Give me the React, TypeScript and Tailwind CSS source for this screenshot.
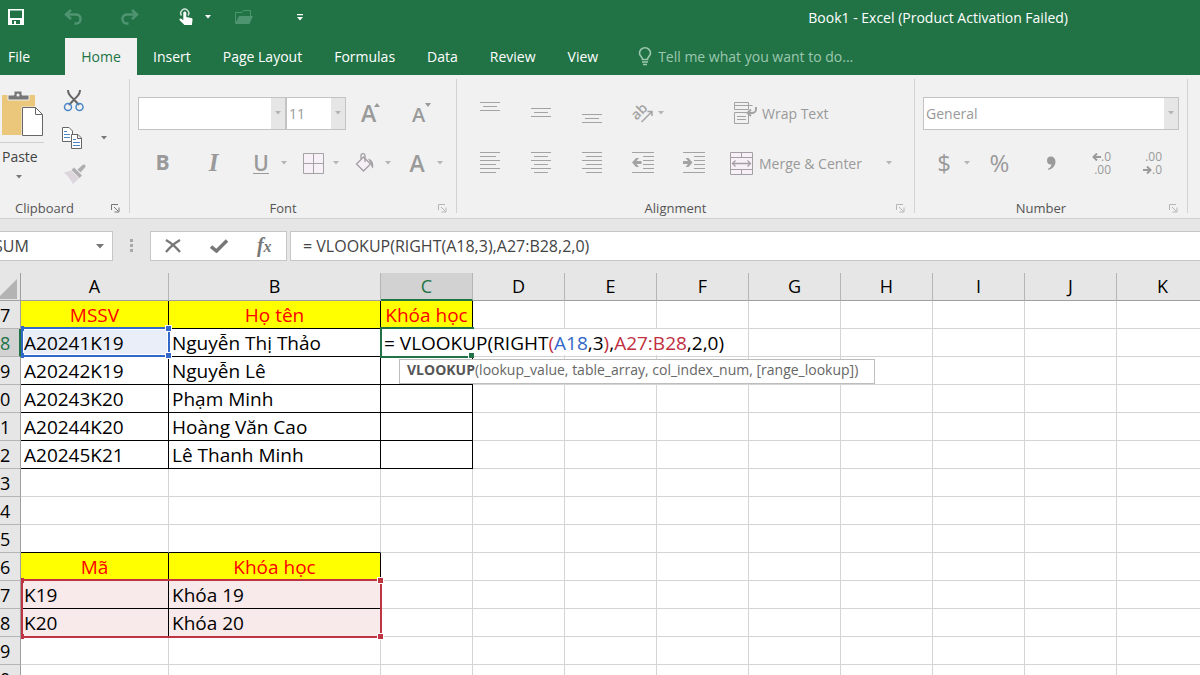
import type { ReactNode } from "react";

type Row = { n: string; a?: string; b?: string; c?: string; kind?: "head" | "data" | "lookupHead" | "lookup" };

const tabs = ["Insert", "Page Layout", "Formulas", "Data", "Review", "View"];

const columns = ["A", "B", "C", "D", "E", "F", "G", "H", "I", "J", "K"];

const rows: Row[] = [
  { n: "7", a: "MSSV", b: "Họ tên", c: "Khóa học", kind: "head" },
  { n: "8", a: "A20241K19", b: "Nguyễn Thị Thảo", kind: "data" },
  { n: "9", a: "A20242K19", b: "Nguyễn Lê", kind: "data" },
  { n: "0", a: "A20243K20", b: "Phạm Minh", kind: "data" },
  { n: "1", a: "A20244K20", b: "Hoàng Văn Cao", kind: "data" },
  { n: "2", a: "A20245K21", b: "Lê Thanh Minh", kind: "data" },
  { n: "3" },
  { n: "4" },
  { n: "5" },
  { n: "6", a: "Mã", b: "Khóa học", kind: "lookupHead" },
  { n: "7", a: "K19", b: "Khóa 19", kind: "lookup" },
  { n: "8", a: "K20", b: "Khóa 20", kind: "lookup" },
  { n: "9" },
  { n: "0" },
];

function Caret({ className = "text-[#b5b5b5]" }: { className?: string }) {
  return (
    <svg width="6" height="4" viewBox="0 0 6 4" className={`shrink-0 ${className}`}>
      <path d="M0 0h6L3 3.5z" fill="currentColor" />
    </svg>
  );
}

function Tool({ label, children }: { label: string; children: ReactNode }) {
  return (
    <button type="button" aria-label={label} className="flex h-8 w-[51px] items-center justify-center">
      {children}
    </button>
  );
}

function SplitTool({ label, children }: { label: string; children: ReactNode }) {
  return (
    <button type="button" aria-label={label} className="flex h-8 w-[52px] items-center gap-[2px] pl-1">
      <span className="flex w-9 justify-center">{children}</span>
      <Caret />
    </button>
  );
}

function Group({ label, className = "", labelClass = "", active = false, children }: {
  label: string;
  className?: string;
  labelClass?: string;
  active?: boolean;
  children: ReactNode;
}) {
  return (
    <section aria-label={label} className={`flex shrink-0 flex-col pt-[13px] ${className}`}>
      {children}
      <div className="mt-[10px] flex h-5 items-center">
        <span className={`flex-1 text-center text-[13px] leading-5 text-[#555] ${labelClass}`}>{label}</span>
        <button type="button" aria-label={`${label} settings`} className={`w-5 pl-[2px] ${active ? "text-[#777]" : "text-[#b5b5b5]"}`}>
          <svg width="9" height="9" viewBox="0 0 9 9" fill="none" stroke="currentColor">
            <path d="M.5 6V.5H7M3 3l4 4M8 3.500V8H3.500" />
          </svg>
        </button>
      </div>
    </section>
  );
}

function Divider() {
  return <div className="mt-1 mb-[5px] w-px shrink-0 bg-[#d2d2d2]" />;
}

/* Horizontal strokes for the alignment buttons, each one [x, y, width] */
function Lines({ lines }: { lines: number[][] }) {
  return (
    <svg width="22" height="22" viewBox="0 0 22 22" fill="#a3a3a3">
      {lines.map(([x, y, w]) => (
        <rect key={y} x={x} y={y} width={w} height="1" />
      ))}
    </svg>
  );
}

function IndentIcon({ right = false }: { right?: boolean }) {
  return (
    <svg width="22" height="22" viewBox="0 0 22 22" fill="#a3a3a3">
      <path d="M0 0h22v1H0zM11 4h11v1H11zM11 8h11v1H11zM11 12h11v1H11zM11 16h11v1H11zM0 20h22v1H0z" />
      <path
        d={right ? "M0 9h5L2.500 6H5.500L9.500 10.500 5.500 15H2.500L5 12H0z" : "M9.500 9H4.500L7 6H4L0 10.500 4 15H7L4.500 12h5z"}
      />
    </svg>
  );
}

function TitleBar() {
  return (
    <div className="flex h-[34px] items-center">
      <div className="flex flex-1 items-center pl-2 text-white">
        <button type="button" aria-label="Save">
          <svg width="16" height="16" viewBox="0 0 16 16">
            <path fill="currentColor" fillRule="evenodd" d="M0 0h16v16H0zM2 1.500v7.500h12V1.500zM4 11v4h2v-3h2v3h4v-4z" />
          </svg>
        </button>
        <button type="button" aria-label="Undo" className="ml-10 text-[#4f9470]">
          <svg width="18" height="16" viewBox="0 0 18 16" fill="none" stroke="currentColor" strokeWidth="2.500">
            <path d="M7 1 2 5.500 7 10M2 5.500h9.500c3 0 5 1.500 5 4.500s-2 4.500-4 4.500h-2" />
          </svg>
        </button>
        <button type="button" aria-label="Redo" className="ml-[39px] text-[#4f9470]">
          <svg width="18" height="16" viewBox="0 0 18 16" fill="none" stroke="currentColor" strokeWidth="2.500">
            <path d="M11 1l5 4.500-5 4.500M16 5.500H6.500c-3 0-5 1.500-5 4.500s2 4.500 4 4.500h2" />
          </svg>
        </button>
        <button type="button" aria-label="Touch or mouse mode" className="ml-10 flex items-center gap-3">
          <svg width="14" height="18" viewBox="0 0 14 18">
            <path d="M2.500 7.500A4 4 0 1 1 9 7.500" fill="none" stroke="currentColor" strokeWidth="1.500" opacity=".8" />
            <path
              fill="currentColor"
              d="M4.300 5c0-2 3-2 3 0v4l5 1c1 .2 1.300 1 1.200 2l-.6 5H5.500L.7 12.200c-.8-1 .5-2.200 1.600-1.400l2 1.500z"
            />
          </svg>
          <Caret className="text-white" />
        </button>
        <button type="button" aria-label="Open" className="ml-6 text-[#4f9470]">
          <svg width="18" height="15" viewBox="0 0 18 15">
            <path d="M.5 13V2.500H7L8.500.500h7V6" fill="none" stroke="currentColor" />
            <path d="M4 6h14l-3.500 8H0z" fill="currentColor" />
          </svg>
        </button>
        <button type="button" aria-label="Customize quick access" className="ml-11">
          <svg width="6" height="7" viewBox="0 0 6 7" fill="currentColor">
            <path d="M0 0h6v1.300H0zM0 3h6L3 6.500z" />
          </svg>
        </button>
      </div>
      <h1 className="pr-[132px] text-[14px] text-white">Book1 - Excel (Product Activation Failed)</h1>
    </div>
  );
}

function Tabs() {
  return (
    <nav className="flex h-[41px] items-end text-[14px] text-white">
      <button type="button" className="h-[37px] w-[65px] pl-2 text-left">File</button>
      <button type="button" className="h-[37px] w-[72px] bg-[#f1f1f1] text-[#217346]">Home</button>
      {tabs.map((tab) => (
        <button key={tab} type="button" className="h-[37px] px-4">{tab}</button>
      ))}
      <button type="button" className="flex h-[37px] items-center gap-[6px] pl-6 text-[#9dc7af]">
        <svg width="14" height="19" viewBox="0 0 14 19" fill="none" stroke="currentColor" strokeWidth="1.600">
          <path d="M4.500 12.500c0-2.500-3-3.500-3-6.500a5.500 5.200 0 0 1 11 0c0 3-3 4-3 6.500z" />
          <path d="M4 15h6M5 17.500h4" />
        </svg>
        Tell me what you want to do...
      </button>
    </nav>
  );
}

function ClipboardGroup() {
  return (
    <Group label="Clipboard" active labelClass="pr-5" className="w-[129px]">
      <div className="flex h-[100px]">
        <button type="button" className="flex w-[44px] flex-col items-start text-[14px] text-[#444]">
          <svg width="43" height="47" viewBox="0 0 43 47" className="mt-px">
            <path fill="#eac77b" d="M2 6h33v40H2z" />
            <path fill="#777" d="M8 6h6V2h8v4h7v5H8z" stroke="#f1f1f1" />
            <circle cx="18" cy="6" r="1.500" fill="#f1f1f1" />
            <path d="M21.500 17.500h15l7 7v22h-22z" fill="#f1f1f1" />
            <path d="M22.500 18.500h13l7 7v21h-20z" fill="#fff" stroke="#666" />
            <path d="M35.500 18.500v7h7" fill="none" stroke="#666" />
          </svg>
          <span className="mt-[6px] h-px w-full bg-[#d0d0d0]" />
          <span className="mt-1 ml-[2px] leading-5">Paste</span>
          <span className="mt-2 ml-4"><Caret className="text-[#777]" /></span>
        </button>
        <div className="flex flex-col items-start gap-[15px] pl-[18px]">
          <button type="button" aria-label="Cut">
            <svg width="24" height="24" viewBox="0 0 24 24" fill="none">
              <path d="M6 2c0 4 3 7 5.500 9L17 17M18 2c0 4-3 7-5.500 9L7 17" stroke="#666" strokeWidth="2" />
              <circle cx="6" cy="19" r="3.500" stroke="#4a86c5" strokeWidth="1.500" />
              <circle cx="17.500" cy="19" r="3.500" stroke="#4a86c5" strokeWidth="1.500" />
            </svg>
          </button>
          <button type="button" aria-label="Copy" className="flex items-center gap-[19px]">
            <svg width="20" height="22" viewBox="0 0 20 22" fill="#fff" stroke="#666">
              <path d="M.5.500H7L10.500 4v10.500H.5z" />
              <path d="M2 4.500h3M2 7.500h6M2 10.500h6" stroke="#4a86c5" />
              <path d="M9.500 7.500H16l3.500 3.500v10.500h-10zM15.500 7.500v4h4" />
              <path d="M11 12.500h3M11 15.500h7M11 18.500h7" stroke="#4a86c5" />
            </svg>
            <Caret className="text-[#777]" />
          </button>
          <button type="button" aria-label="Format Painter" className="pl-px">
            <svg width="24" height="20" viewBox="0 0 24 20">
              <path d="M1 8.500 8 6.500l8 8L10 20C7 15 4 11 1 8.500z" fill="#ddd6dd" />
              <path d="m8.500 6 2.500-2.500 8 8-2.500 2.500z" fill="#b0aeb0" />
              <path d="m14.500 5.500 5-4.500c2-1.500 4 .5 2.500 2.500l-4.500 5z" fill="#b0aeb0" />
            </svg>
          </button>
        </div>
      </div>
    </Group>
  );
}

function FontGroup() {
  return (
    <Group label="Font" className="w-[326px]">
      <div className="flex h-[50px] items-center pl-2">
        <div className="flex h-[33px] w-[148px] items-center border border-[#c3c3c3] bg-white">
          <input aria-label="Font name" defaultValue="" className="h-full min-w-0 flex-1 outline-none" />
          <span className="flex h-full w-[14px] items-center justify-center bg-[#e6e6e6]"><Caret /></span>
        </div>
        <div className="flex h-[33px] w-[60px] items-center border border-[#c3c3c3] bg-white">
          <input aria-label="Font size" defaultValue="11" className="h-full min-w-0 flex-1 pl-[2px] text-[14px] text-[#999] outline-none" />
          <span className="flex h-full w-[14px] items-center justify-center bg-[#e6e6e6]"><Caret /></span>
        </div>
        <Tool label="Increase font size">
          <svg width="22" height="24" viewBox="0 0 22 24" fill="#9a9a9a" className="overflow-visible">
            <text x="0" y="21" className="text-[23px] font-semibold">A</text>
            <path d="M16 2l3 4h-6z" />
          </svg>
        </Tool>
        <Tool label="Decrease font size">
          <svg width="22" height="24" viewBox="0 0 22 24" fill="#9a9a9a" className="overflow-visible">
            <text x="0" y="21" className="text-[20px] font-semibold">A</text>
            <path d="M13 2h6l-3 4z" />
          </svg>
        </Tool>
      </div>
      <div className="flex h-[50px] items-center pl-[7px] text-[21px] text-[#9a9a9a]">
        <Tool label="Bold"><b>B</b></Tool>
        <Tool label="Italic"><i className="font-['Liberation_Serif',serif] text-[25px] font-bold">I</i></Tool>
        <SplitTool label="Underline">
          <span className="border-b border-[#9a9a9a] leading-5 font-semibold">U</span>
        </SplitTool>
        <SplitTool label="Borders">
          <svg width="21" height="21" viewBox="0 0 21 21" fill="#f7f0f7" stroke="#a3a3a3">
            <path d="M.5.500h20v20H.5zM10.500.500v20M.5 10.500h20" />
          </svg>
        </SplitTool>
        <SplitTool label="Fill colour">
          <svg width="20" height="20" viewBox="0 0 20 20" fill="none" stroke="#a39fa3" strokeWidth="1.300">
            <path d="M8.500 4 15.500 11 8.500 18 1.500 11z" fill="#f7f0f7" />
            <path d="M6 6V2.500c0-2.500 4-2.500 4 0V9" />
            <path d="M13 5.500c4 1 6 4 5 10-1.500-1-2-3-2-4.500z" fill="#a39fa3" stroke="none" />
          </svg>
        </SplitTool>
        <SplitTool label="Font colour"><span className="text-[23px] font-semibold">A</span></SplitTool>
      </div>
    </Group>
  );
}

function AlignmentGroup() {
  return (
    <Group label="Alignment" className="w-[457px]">
      <div className="flex h-[50px] items-center pl-[7px]">
        <Tool label="Top align"><Lines lines={[[1, 0, 20], [4, 4, 14], [1, 8, 20]]} /></Tool>
        <Tool label="Middle align"><Lines lines={[[1, 6, 20], [4, 10, 14], [1, 14, 20]]} /></Tool>
        <Tool label="Bottom align"><Lines lines={[[1, 12, 20], [4, 16, 14], [1, 20, 20]]} /></Tool>
        <button type="button" aria-label="Orientation" className="flex h-8 w-[116px] items-center gap-1 pl-4">
          <svg width="21" height="20" viewBox="0 0 21 20" fill="none" stroke="#a3a3a3" strokeWidth="1.500" className="overflow-visible">
            <text x="0" y="15" transform="rotate(-45 5 12)" fill="#a3a3a3" stroke="none" className="text-[14px] font-semibold">ab</text>
            <path d="M8.500 19 19 8.500M14.500 8.500H19V13" />
          </svg>
          <Caret />
        </button>
        <button type="button" className="flex items-center gap-1 text-[14px] text-[#999]">
          <svg width="25" height="24" viewBox="0 0 25 24" fill="none" stroke="#a3a3a3">
            <path d="M1.500 1.500h14v7h-14zM1.500 11.500h14v11h-14zM1.500 4.500h18M4 15.500h9M4 18.500h9" />
            <path d="M23 6v2.500c0 2-2 3.500-4 3.500h-4M18 8.500 14.500 12l3.500 3" strokeWidth="2" />
          </svg>
          Wrap Text
        </button>
      </div>
      <div className="flex h-[50px] items-center pl-[7px]">
        <Tool label="Align left"><Lines lines={[[1, 0, 20], [1, 4, 16], [1, 8, 20], [1, 12, 16], [1, 16, 20], [1, 20, 16]]} /></Tool>
        <Tool label="Center"><Lines lines={[[1, 0, 20], [4, 4, 14], [1, 8, 20], [4, 12, 14], [1, 16, 20], [4, 20, 14]]} /></Tool>
        <Tool label="Align right"><Lines lines={[[1, 0, 20], [5, 4, 16], [1, 8, 20], [5, 12, 16], [1, 16, 20], [5, 20, 16]]} /></Tool>
        <Tool label="Decrease indent"><IndentIcon /></Tool>
        <Tool label="Increase indent"><IndentIcon right /></Tool>
        <button type="button" className="flex flex-1 items-center gap-[6px] pr-[22px] pl-[11px] text-[14px] text-[#999]">
          <svg width="23" height="23" viewBox="0 0 23 23" fill="#f7f0f7" stroke="#a39fa3">
            <path d="M.5.500h22v22H.5zM.5 5.500h22M.5 17.500h22M11.500.500v5M11.500 17.500v5" />
            <path d="M2.500 11.500h18M5.500 8.500l-3 3 3 3M17.500 8.500l3 3-3 3" fill="none" strokeWidth="1.300" />
          </svg>
          <span className="flex-1 text-left">Merge &amp; Center</span>
          <Caret />
        </button>
      </div>
    </Group>
  );
}

function NumberGroup() {
  return (
    <Group label="Number" className="w-[272px]">
      <div className="flex h-[50px] items-center px-2">
        <div className="flex h-[33px] flex-1 items-center border border-[#c3c3c3] bg-white">
          <select aria-label="Number format" className="h-full min-w-0 flex-1 appearance-none pl-[2px] text-[14px] text-[#999] outline-none">
            <option>General</option>
          </select>
          <span className="flex h-full w-[14px] items-center justify-center bg-[#e6e6e6]"><Caret /></span>
        </div>
      </div>
      <div className="flex h-[50px] items-center pl-[7px] text-[#9a9a9a]">
        <SplitTool label="Accounting format"><span className="text-[24px]">$</span></SplitTool>
        <Tool label="Percent"><span className="text-[24px]">%</span></Tool>
        <Tool label="Comma style">
          <svg width="10" height="14" viewBox="0 0 10 14" fill="currentColor">
            <path d="M1 4.500C1 2 2.500.500 5 .500s4.500 2 4.500 5c0 4-3 7.500-7 8.500L2 12.800c2-1 3.400-2.500 3.500-4.300C3 9 1 7.500 1 4.500z" />
          </svg>
        </Tool>
        <Tool label="Increase decimal">
          <span className="flex flex-col items-end text-[12px] leading-[13px]">
            <span className="flex items-center">
              <svg width="9" height="8" viewBox="0 0 9 8" fill="none" stroke="currentColor" strokeWidth="2"><path d="M9 4H1.500M5 .500 1.500 4 5 7.500" /></svg>
              .0
            </span>
            <span>.00</span>
          </span>
        </Tool>
        <Tool label="Decrease decimal">
          <span className="flex flex-col items-end text-[12px] leading-[13px]">
            <span>.00</span>
            <span className="flex items-center">
              <svg width="9" height="8" viewBox="0 0 9 8" fill="none" stroke="currentColor" strokeWidth="2"><path d="M0 4h7.500M4 .500 7.500 4 4 7.500" /></svg>
              .0
            </span>
          </span>
        </Tool>
      </div>
    </Group>
  );
}

function FormulaBar() {
  return (
    <div className="flex h-[54px] shrink-0 items-center bg-[#e6e6e6] text-[16px] text-[#444]">
      <div className="flex h-[30px] w-[113px] items-center overflow-hidden border border-l-0 border-[#c6c6c6] bg-white pr-2">
        <input aria-label="Name box" defaultValue="SUM" className="-ml-[6px] h-full min-w-0 flex-1 outline-none" />
        <svg width="8" height="5" viewBox="0 0 8 5"><path d="M0 0h8L4 4.500z" fill="#777" /></svg>
      </div>
      <svg width="3" height="14" viewBox="0 0 3 14" fill="#a8a8a8" className="ml-[17px]">
        <path d="M0 0h3v3H0zM0 5h3v3H0zM0 10h3v3H0z" />
      </svg>
      <div className="ml-[17px] flex h-[30px] w-[137px] items-center justify-around border border-[#c6c6c6] bg-white text-[#777]">
        <button type="button" aria-label="Cancel">
          <svg width="16" height="14" viewBox="0 0 16 14" fill="none" stroke="currentColor" strokeWidth="2.200">
            <path d="M1 1c5 3 10 7 14 12M15 1C10 4 5 8 1 13" />
          </svg>
        </button>
        <button type="button" aria-label="Enter">
          <svg width="18" height="14" viewBox="0 0 18 14" fill="none" stroke="currentColor" strokeWidth="3.500">
            <path d="m1 7.500 5.500 4.500L17 1.500" />
          </svg>
        </button>
        <button type="button" aria-label="Insert function" className="font-['Liberation_Serif',serif] font-bold italic">
          <span className="text-[20px] leading-6">f</span>
          <span className="text-[16px] leading-6">x</span>
        </button>
      </div>
      <input
        aria-label="Formula bar"
        defaultValue="= VLOOKUP(RIGHT(A18,3),A27:B28,2,0)"
        className="ml-[3px] h-[30px] min-w-0 flex-1 border border-r-0 border-[#c6c6c6] bg-white pl-3 outline-none"
      />
    </div>
  );
}

/* Cell under edit: its text runs over the neighbours, with the argument hint below */
function CellEditor() {
  return (
    <>
      <div className="absolute -top-[2px] -left-px z-10 h-[31px] w-[94px] border-2 border-[#217346]" />
      <div className="absolute top-0 left-px z-20 h-[26px] w-[366px] bg-white pl-[2px] leading-[29px] whitespace-pre">
        = VLOOKUP(RIGHT<span className="text-[#c0303f]">(</span>
        <span className="text-[#3268c8]">A18</span>,3<span className="text-[#c0303f]">)</span>,
        <span className="text-[#c0303f]">A27:B28</span>,2,0)
      </div>
      <div className="absolute right-[-2px] bottom-[-2px] z-20 size-[6px] border-t border-l border-white bg-[#217346]" />
      <div role="tooltip" className="absolute top-[30px] left-[18px] z-30 h-[25px] border border-[#bdbdbd] bg-white pr-4 pl-[7px] text-[14px] leading-5 whitespace-nowrap text-[#666]">
        <b className="text-[#555]">VLOOKUP</b>(lookup_value, table_array, col_index_num, [range_lookup])
      </div>
    </>
  );
}

function RangeBox({ blue = false }: { blue?: boolean }) {
  const handle = blue ? "bg-[#3268c8]" : "bg-[#be3442]";
  return (
    <div
      className={
        blue
          ? "absolute -top-[2px] left-0 z-10 h-[30px] w-[149px] border-2 border-[#3268c8] shadow-[inset_0_0_0_1px_#fff]"
          : "absolute -top-[2px] left-0 z-10 h-[59px] w-[361px] border-2 border-[#be3442]"
      }
    >
      <i className={`absolute -top-[3px] -left-[2px] h-[5px] w-[3px] ${handle}`} />
      <i className={`absolute -top-[4px] -right-[4px] size-[7px] border border-white ${handle}`} />
      <i className={`absolute -bottom-[3px] -left-[2px] h-[5px] w-[3px] ${handle}`} />
      <i className={`absolute -right-[4px] -bottom-[4px] size-[7px] border border-white ${handle}`} />
    </div>
  );
}

function cellStyle(row: Row, col: string, i: number) {
  const black = "border-black";
  const grid = "border-[#d4d4d4]";
  const inTable = row.kind && (col === "A" || col === "B" || (col === "C" && i < 6));
  if (!inTable) {
    // the row above the lookup table carries its top edge
    return i === 8 && (col === "A" || col === "B") ? "border-r-[#d4d4d4] border-b-black" : grid;
  }
  if (row.kind === "head" || row.kind === "lookupHead") return `${black} bg-[#ffff00] text-center text-[#ff0000]`;
  if (row.kind === "lookup") return `${black} bg-[#f8e9eb]`;
  return i === 1 && col === "A" ? `${black} bg-[#e9eef8]` : black;
}

function Sheet() {
  return (
    <div className="min-h-0 flex-1 overflow-hidden bg-white text-[19px] text-black">
      <table className="w-px table-fixed border-separate border-spacing-0">
        <colgroup>
          <col className="w-[21px]" />
          {columns.map((c) => (
            <col key={c} className={c === "A" ? "w-[148px]" : c === "B" ? "w-[212px]" : "w-[92px]"} />
          ))}
        </colgroup>
        <thead>
          <tr className="h-[28px] bg-[#e6e6e6] text-[18px] leading-[25px]">
            <th aria-label="Select all" className="border-r border-b border-[#9f9f9f] p-0">
              <svg width="17" height="20" viewBox="0 0 17 20" className="mt-1"><path d="M17 0v20H0v-3z" fill="#b3b3b3" /></svg>
            </th>
            {columns.map((c) => (
              <th
                key={c}
                className={
                  c === "C"
                    ? "border-r border-b-2 border-r-[#b5b5b5] border-b-[#217346] bg-[#d2d2d2] p-0 font-normal text-[#217346]"
                    : "border-r border-b border-r-[#b5b5b5] border-b-[#9f9f9f] p-0 font-normal"
                }
              >
                {c}
              </th>
            ))}
          </tr>
        </thead>
        <tbody>
          {rows.map((row, i) => (
            <tr key={i} className="h-[28px] leading-[25px]">
              <th
                className={
                  i === 1
                    ? "border-r-2 border-b border-r-[#217346] border-b-[#b5b5b5] bg-[#d2d2d2] px-0 pt-[2px] pb-0 text-left text-[18px] font-normal text-[#217346]"
                    : "border-r border-b border-r-[#9f9f9f] border-b-[#b5b5b5] bg-[#e6e6e6] px-0 pt-[2px] pb-0 text-left text-[18px] font-normal"
                }
              >
                {row.n}
              </th>
              {columns.map((c) => (
                <td key={c} className={`relative border-r border-b px-[3px] pt-[2px] pb-0 whitespace-nowrap ${cellStyle(row, c, i)}`}>
                  {c === "A" && row.a}
                  {c === "B" && row.b}
                  {c === "C" && row.c}
                  {c === "A" && i === 1 && <RangeBox blue />}
                  {c === "A" && i === 10 && <RangeBox />}
                  {c === "C" && i === 1 && <CellEditor />}
                </td>
              ))}
            </tr>
          ))}
        </tbody>
      </table>
    </div>
  );
}

export default function App() {
  return (
    <div className="flex h-screen flex-col overflow-hidden bg-white font-['Open_Sans','Noto_Sans',sans-serif]">
      <header className="shrink-0 bg-[#217346]">
        <TitleBar />
        <Tabs />
      </header>
      <div className="flex shrink-0 border-b border-[#d0d0d0] bg-[#f1f1f1]">
        <ClipboardGroup />
        <Divider />
        <FontGroup />
        <Divider />
        <AlignmentGroup />
        <Divider />
        <NumberGroup />
        <Divider />
      </div>
      <FormulaBar />
      <Sheet />
    </div>
  );
}
